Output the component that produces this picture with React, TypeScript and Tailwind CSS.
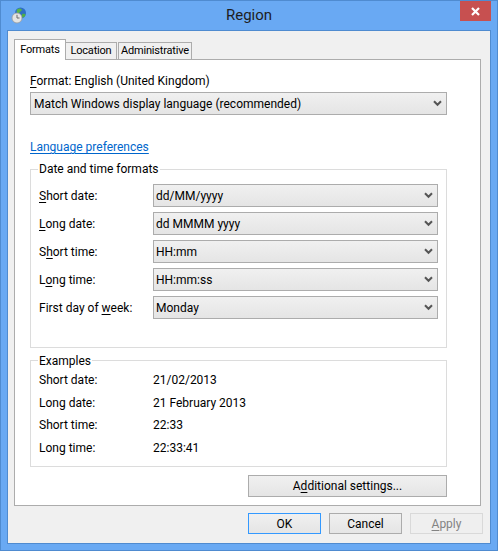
import React from "react";

const Chevron = () => (
  <svg width="9" height="7" viewBox="0 0 9 7" className="shrink-0">
    <path d="M1 1.2 L4.5 4.8 L8 1.2" fill="none" stroke="#555555" strokeWidth="2" />
  </svg>
);

const U = ({ children }: { children: React.ReactNode }) => <span className="underline underline-offset-2">{children}</span>;

const Combo = ({ text, className }: { text: string; className: string }) => (
  <div className={`flex h-[23px] items-center justify-between border border-[#acacac] bg-gradient-to-b from-[#f0f0f0] to-[#e5e5e5] pr-[4px] text-black ${className}`}>
    <span>{text}</span>
    <Chevron />
  </div>
);

const Btn = ({ children, className }: { children: React.ReactNode; className: string }) => (
  <div className={`flex items-center justify-center ${className}`}>{children}</div>
);

const formats: [React.ReactNode, string][] = [
  [<><U>S</U>hort date:</>, "dd/MM/yyyy"],
  [<><U>L</U>ong date:</>, "dd MMMM yyyy"],
  [<>S<U>h</U>ort time:</>, "HH:mm"],
  [<>L<U>o</U>ng time:</>, "HH:mm:ss"],
  [<>First day of <U>w</U>eek:</>, "Monday"],
];

const examples: [string, string, string][] = [
  ["Short date:", "21/02/2013", "h-[23px]"],
  ["Long date:", "21 February 2013", "h-[23px]"],
  ["Short time:", "22:33", "h-[22px]"],
  ["Long time:", "22:33:41", "h-[23px]"],
];

export default function App() {
  return (
    <div className="flex h-[551px] w-[498px] flex-col overflow-hidden border border-[#4f8bd0] bg-[#69a9f3] font-['Roboto','Noto_Sans',sans-serif] text-[12px] leading-[18px] text-black">
      <div className="flex h-[29px] shrink-0 items-start">
        <svg width="16" height="17" viewBox="0 0 16 17" className="ml-[10px] mt-[6px] shrink-0">
          <circle cx="9.5" cy="6" r="5.5" fill="#2f6fc4" />
          <path d="M6 2.5 C8 1 10 1.5 11 3 C10 5 8 4.5 8 6.5 C6.5 6.5 5 5 6 2.5Z" fill="#58b548" />
          <path d="M11 7 C13 6.5 14.5 7 14.5 8 C13.5 10.5 11.5 11 11 10Z" fill="#4fae46" />
          <circle cx="6" cy="11" r="5" fill="#e4e4e2" stroke="#9c9c9c" strokeWidth="0.8" />
          <path d="M6 7.8 V11 H8.5" fill="none" stroke="#6a6a6a" strokeWidth="1" />
        </svg>
        <div className="flex-1 pl-[11px] pt-[4px] text-center text-[15px] leading-[20px] text-[#1e1e1e]">Region</div>
        <div className="mr-[6px] flex h-[20px] w-[31px] shrink-0 items-center justify-center bg-[#c75050]">
          <svg width="9" height="9" viewBox="0 0 9 9">
            <path d="M1 1 L8 8 M8 1 L1 8" stroke="#ffffff" strokeWidth="2.2" fill="none" />
          </svg>
        </div>
      </div>

      <div className="mx-[6px] flex h-[514px] shrink-0 flex-col border border-[#4f8bd0] bg-[#f0f0f0] px-[6px]">
        <div className="flex h-[28px] shrink-0 items-end pt-[7px] text-[11px] tracking-[-0.2px]">
          <div className="z-10 -mb-px flex h-[21px] w-[52px] items-center justify-center border border-b-0 border-[#acacac] bg-white">Formats</div>
          <div className="flex h-[17px] w-[51px] items-center justify-center border border-l-0 border-b-0 border-[#acacac] bg-[#f0f0f0]">Location</div>
          <div className="ml-px flex h-[17px] w-[74px] items-center justify-center border border-b-0 border-[#acacac] bg-[#f0f0f0]">Administrative</div>
        </div>

        <div className="h-[447px] w-[467px] shrink-0 border border-[#acacac] bg-white px-[15px]">
          <div className="mt-[12px]"><U>F</U>ormat: English (United Kingdom)</div>
          <Combo text="Match Windows display language (recommended)" className="mt-[2px] w-[417px] pl-[3px]" />
          <a className="mt-[23px] block text-[#0066cc] underline underline-offset-2">Language preferences</a>

          <fieldset className="mt-[4px] h-[188px] w-[417px] border border-[#dcdcdc] px-[8px]">
            <legend className="-ml-[1px] px-[1px] leading-[18px]">Date and time formats</legend>
            <div className="mt-[6px] flex flex-col gap-[5px]">
              {formats.map(([label, value], i) => (
                <div key={i} className="flex h-[23px] items-center">
                  <div className="w-[114px] shrink-0">{label}</div>
                  <Combo text={value} className="w-[285px] pl-[2px]" />
                </div>
              ))}
            </div>
          </fieldset>

          <fieldset className="mt-[3px] h-[116px] w-[417px] border border-[#dcdcdc] px-[8px]">
            <legend className="-ml-[1px] px-[1px] pt-[1px] leading-[18px]">Examples</legend>
            <div className="-mt-[2px] flex flex-col">
              {examples.map(([label, value, h]) => (
                <div key={label} className={`flex items-center ${h}`}>
                  <div className="w-[114px] shrink-0">{label}</div>
                  <div>{value}</div>
                </div>
              ))}
            </div>
          </fieldset>

          <Btn className="ml-[218px] mt-[8px] h-[22px] w-[199px] border border-[#acacac] bg-gradient-to-b from-[#f0f0f0] to-[#e5e5e5]">
            <span>A<U>d</U>ditional settings...</span>
          </Btn>
        </div>

        <div className="flex flex-1 items-start pl-[234px] pt-[7px]">
          <Btn className="h-[21px] w-[73px] border border-[#3399ff] bg-gradient-to-b from-[#f0f0f0] to-[#e5e5e5]">OK</Btn>
          <Btn className="ml-[8px] h-[21px] w-[73px] border border-[#acacac] bg-gradient-to-b from-[#f0f0f0] to-[#e5e5e5]">Cancel</Btn>
          <Btn className="ml-[8px] h-[21px] w-[73px] border border-[#d9d9d9] bg-[#efefef] text-[#838383]"><span><U>A</U>pply</span></Btn>
        </div>
      </div>
    </div>
  );
}
